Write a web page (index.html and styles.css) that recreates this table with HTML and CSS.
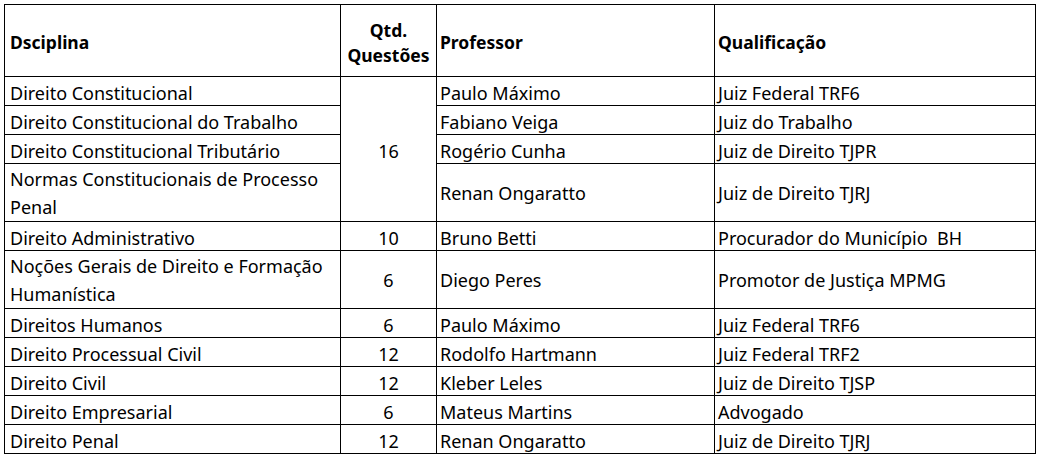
FILE: index.html
```html
<!DOCTYPE html>
<html lang="pt">
<head>
<meta charset="utf-8">
<link rel="stylesheet" href="styles.css">
</head>
<body>
<table class="grade">
  <colgroup>
    <col class="c-disc"><col class="c-qtd"><col class="c-prof"><col class="c-qual">
  </colgroup>
  <thead>
    <tr>
      <th class="first">Dsciplina</th>
      <th class="center">Qtd.<br>Questões</th>
      <th>Professor</th>
      <th>Qualificação</th>
    </tr>
  </thead>
  <tbody>
    <tr><td class="first">Direito Constitucional</td><td class="center" rowspan="4">16</td><td>Paulo Máximo</td><td>Juiz Federal TRF6</td></tr>
    <tr><td class="first">Direito Constitucional do Trabalho</td><td>Fabiano Veiga</td><td>Juiz do Trabalho</td></tr>
    <tr><td class="first">Direito Constitucional Tributário</td><td>Rogério Cunha</td><td>Juiz de Direito TJPR</td></tr>
    <tr class="double"><td class="first">Normas Constitucionais de Processo<br>Penal</td><td>Renan Ongaratto</td><td>Juiz de Direito TJRJ</td></tr>
    <tr><td class="first">Direito Administrativo</td><td class="center">10</td><td>Bruno Betti</td><td>Procurador do Município&nbsp; BH</td></tr>
    <tr class="double"><td class="first">Noções Gerais de Direito e Formação<br>Humanística</td><td class="center">6</td><td>Diego Peres</td><td>Promotor de Justiça MPMG</td></tr>
    <tr><td class="first">Direitos Humanos</td><td class="center">6</td><td>Paulo Máximo</td><td>Juiz Federal TRF6</td></tr>
    <tr><td class="first">Direito Processual Civil</td><td class="center">12</td><td>Rodolfo Hartmann</td><td>Juiz Federal TRF2</td></tr>
    <tr><td class="first">Direito Civil</td><td class="center">12</td><td>Kleber Leles</td><td>Juiz de Direito TJSP</td></tr>
    <tr><td class="first">Direito Empresarial</td><td class="center">6</td><td>Mateus Martins</td><td>Advogado</td></tr>
    <tr><td class="first">Direito Penal</td><td class="center">12</td><td>Renan Ongaratto</td><td>Juiz de Direito TJRJ</td></tr>
  </tbody>
</table>
</body>
</html>
```
FILE: styles.css
```css
html, body {
  margin: 0;
  background: #ffffff;
}
body {
  padding: 4px;
  font-family: "Noto Sans", "Open Sans", sans-serif;
  font-size: 18px;
  color: #000;
}
.grade {
  border-collapse: collapse;
  table-layout: fixed;
  width: 1031px;
}
.c-disc { width: 336px; }
.c-qtd { width: 96px; }
.c-prof { width: 278px; }
.c-qual { width: 321px; }
.grade th, .grade td {
  border: 1px solid #000;
  padding: 0 3px 0 3px;
  text-align: left;
  vertical-align: middle;
  white-space: nowrap;
  box-sizing: border-box;
}
.grade .first {
  padding-left: 5px;
}
.grade th {
  height: 72px;
  line-height: 25px;
  font-size: 17.5px;
  font-weight: 700;
  padding-top: 4px;
}
.grade td {
  height: 28px;
  line-height: 24px;
  padding-top: 4px;
}
.grade tr.double td {
  height: 57px;
  line-height: 27.5px;
  padding-top: 2px;
}
.grade .center {
  text-align: center;
  padding-left: 0;
  padding-right: 0;
}
```
